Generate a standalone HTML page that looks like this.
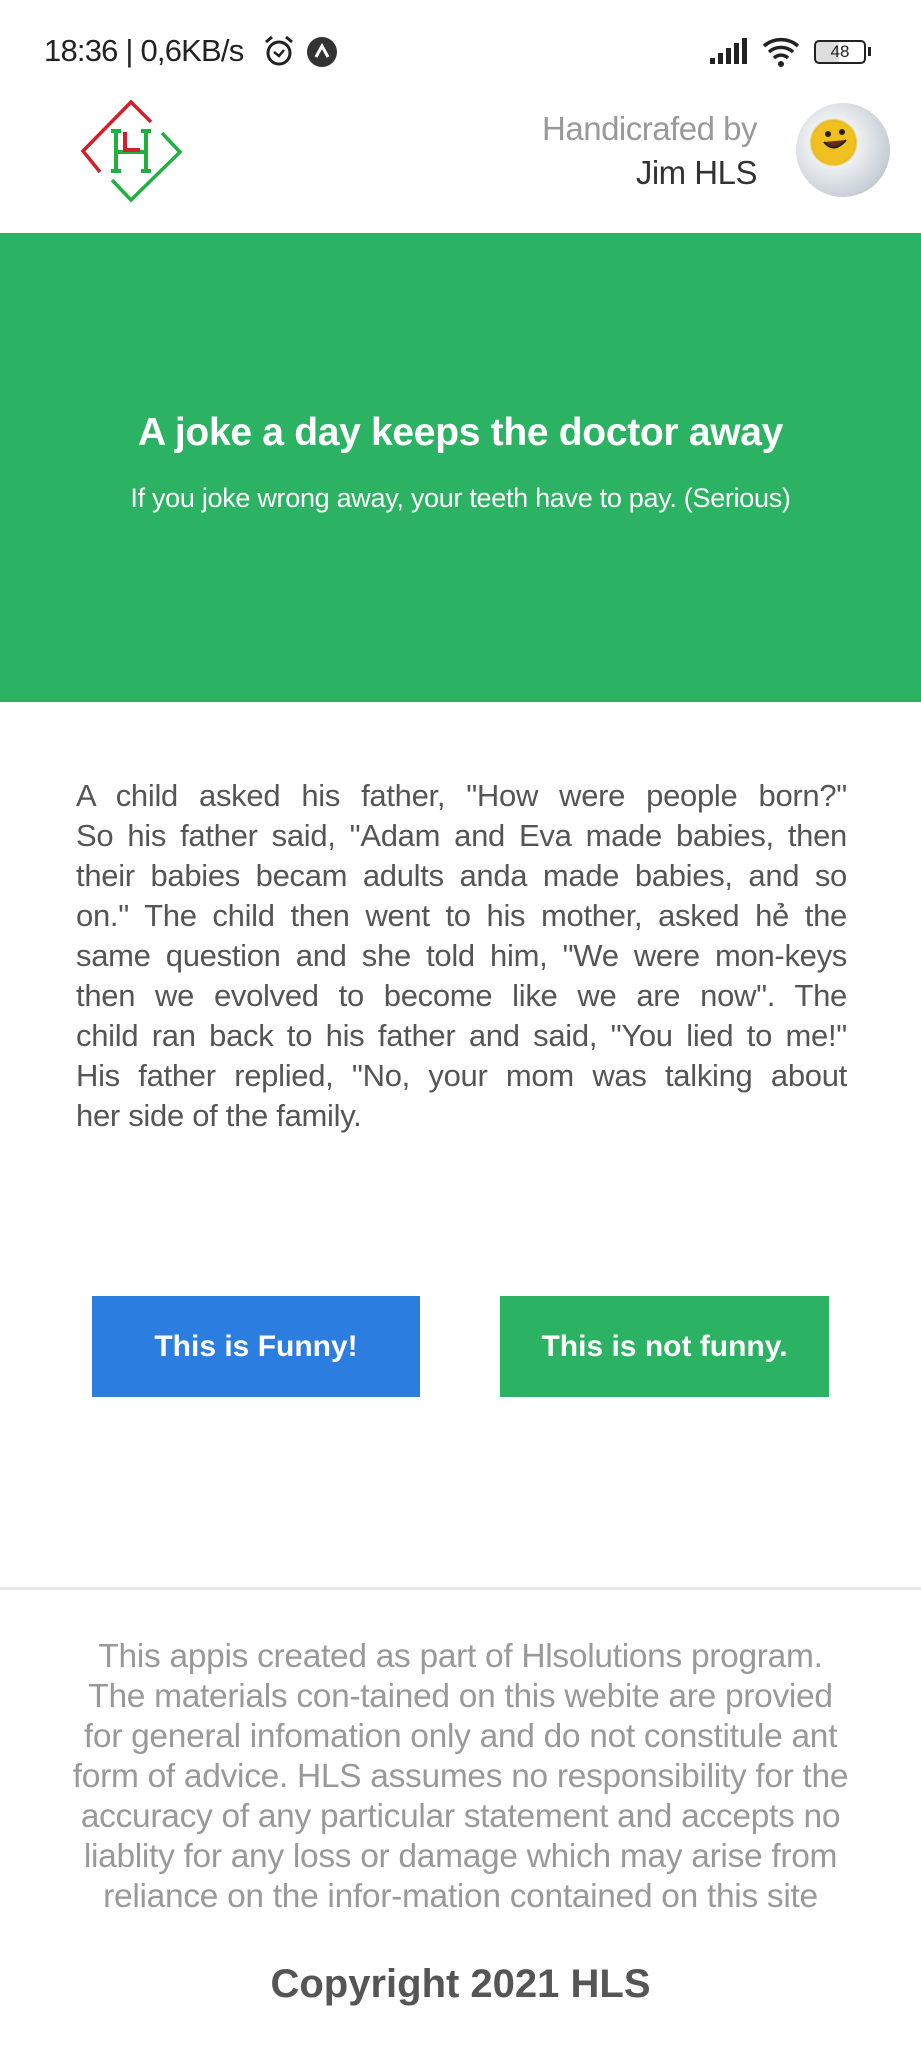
<!DOCTYPE html>
<html><head><meta charset="utf-8"><style>
*{margin:0;padding:0;box-sizing:border-box}
body{width:921px;height:2048px;background:#fff;font-family:"Liberation Sans",Roboto,sans-serif;position:relative;overflow:hidden}
.abs{position:absolute}
.j div{text-align:justify;text-align-last:justify;white-space:nowrap}
.j div.l{text-align-last:left}
</style></head><body>
<div class="abs" style="left:44px;top:33px;font-size:31px;color:#222;letter-spacing:-0.8px">18:36 | 0,6KB/s</div>
<svg class="abs" style="left:262px;top:34px" width="34" height="34" viewBox="0 0 34 34"><circle cx="17" cy="19" r="11" fill="none" stroke="#222" stroke-width="3"/><path d="M12 18l5 4 5-6" fill="none" stroke="#222" stroke-width="2.5"/><path d="M4 8l6-5M30 8l-6-5" stroke="#222" stroke-width="3"/></svg>
<svg class="abs" style="left:306px;top:36px" width="32" height="32"><circle cx="16" cy="16" r="15" fill="#333"/><path d="M10 21l6-11 6 11" fill="none" stroke="#fff" stroke-width="3"/></svg>
<svg class="abs" style="left:708px;top:38px" width="45" height="28"><rect x="2" y="20" width="5" height="6" fill="#222"/><rect x="10" y="15" width="5" height="11" fill="#222"/><rect x="18" y="10" width="5" height="16" fill="#222"/><rect x="26" y="5" width="5" height="21" fill="#222"/><rect x="34" y="0" width="5" height="26" fill="#222"/></svg>
<svg class="abs" style="left:762px;top:34px" width="40" height="34" viewBox="0 0 40 34"><path d="M2 12a26 26 0 0 1 34 0M7 18a18 18 0 0 1 24 0M12 24a10 10 0 0 1 14 0" fill="none" stroke="#222" stroke-width="3.5"/><circle cx="19" cy="30" r="3" fill="#222"/></svg>
<div class="abs" style="left:814px;top:40px;width:52px;height:24px;border:2px solid #222;border-radius:5px;font-size:17px;text-align:center;line-height:20px;color:#222;background:linear-gradient(90deg,#ddd 48%,#fff 48%)">48</div>
<div class="abs" style="left:868px;top:47px;width:3px;height:9px;background:#222"></div>

<svg class="abs" style="left:0;top:0" width="200" height="220">
<path d="M100 172L83 151L131 102L151 122" fill="none" stroke="#d0202a" stroke-width="3.5"/>
<path d="M162 133L180 152L131 200L112 180" fill="none" stroke="#20b040" stroke-width="3.5"/>
<path d="M116 130V172M146 130V172M116 152H146M111 131H121M141 131H151M111 171H121M141 171H151" fill="none" stroke="#20b040" stroke-width="4"/>
<path d="M125 132V150H140" fill="none" stroke="#d0202a" stroke-width="4"/>
</svg>
<div class="abs" style="right:164px;top:110px;font-size:33px;color:#999;text-align:right;letter-spacing:-0.5px">Handicrafed by</div>
<div class="abs" style="right:164px;top:154px;font-size:33px;color:#333;text-align:right;letter-spacing:-0.5px">Jim HLS</div>
<div class="abs" style="left:796px;top:103px;width:94px;height:94px;border-radius:50%;background:radial-gradient(circle at 40% 42%,#f0c020 0 26%,#e8b818 28%,#eef0f2 31%,#c8d0d8 70%,#9aa880 100%)"></div>
<svg class="abs" style="left:812px;top:118px" width="50" height="50"><circle cx="16" cy="16" r="3" fill="#222"/><circle cx="30" cy="14" r="3" fill="#222"/><path d="M12 24q10 12 22-2" fill="#6a2a10" stroke="#222" stroke-width="2"/></svg>

<div class="abs" style="left:0;top:233px;width:921px;height:469px;background:#2bb363;color:#fff;text-align:center">
<div style="margin-top:178px;font-size:39px;font-weight:bold;letter-spacing:-0.3px">A joke a day keeps the doctor away</div>
<div style="margin-top:28px;font-size:27px;letter-spacing:-0.3px">If you joke wrong away, your teeth have to pay. (Serious)</div>
</div>

<div class="abs j" style="left:76px;top:776px;width:771px;font-size:31px;line-height:40px;color:#555;letter-spacing:-0.3px">
<div>A child asked his father, "How were people born?"</div>
<div>So his father said, "Adam and Eva made babies, then</div>
<div>their babies becam adults anda made babies, and so</div>
<div>on." The child then went to his mother, asked hẻ the</div>
<div>same question and she told him, "We were mon-keys</div>
<div>then we evolved to become like we are now". The</div>
<div>child ran back to his father and said, "You lied to me!"</div>
<div>His father replied, "No, your mom was talking about</div>
<div class="l">her side of the family.</div>
</div>

<div class="abs" style="left:92px;top:1296px;width:328px;height:101px;background:#2b7de0;color:#fff;font-size:30px;font-weight:bold;text-align:center;line-height:101px">This is Funny!</div>
<div class="abs" style="left:500px;top:1296px;width:329px;height:101px;background:#2bb363;color:#fff;font-size:30px;font-weight:bold;text-align:center;line-height:101px">This is not funny.</div>

<div class="abs" style="left:0;top:1587px;width:921px;height:3px;background:#e8e8e8"></div>
<div class="abs" style="left:0;top:1637px;width:921px;font-size:33.5px;line-height:40px;color:#999;text-align:center;letter-spacing:-0.3px;white-space:nowrap">This appis created as part of Hlsolutions program.<br>The materials con-tained on this webite are provied<br>for general infomation only and do not constitule ant<br>form of advice. HLS assumes no responsibility for the<br>accuracy of any particular statement and accepts no<br>liablity for any loss or damage which may arise from<br>reliance on the infor-mation contained on this site</div>
<div class="abs" style="left:0;top:1962px;width:921px;text-align:center;font-size:40px;font-weight:bold;color:#555">Copyright 2021 HLS</div>
</body></html>
